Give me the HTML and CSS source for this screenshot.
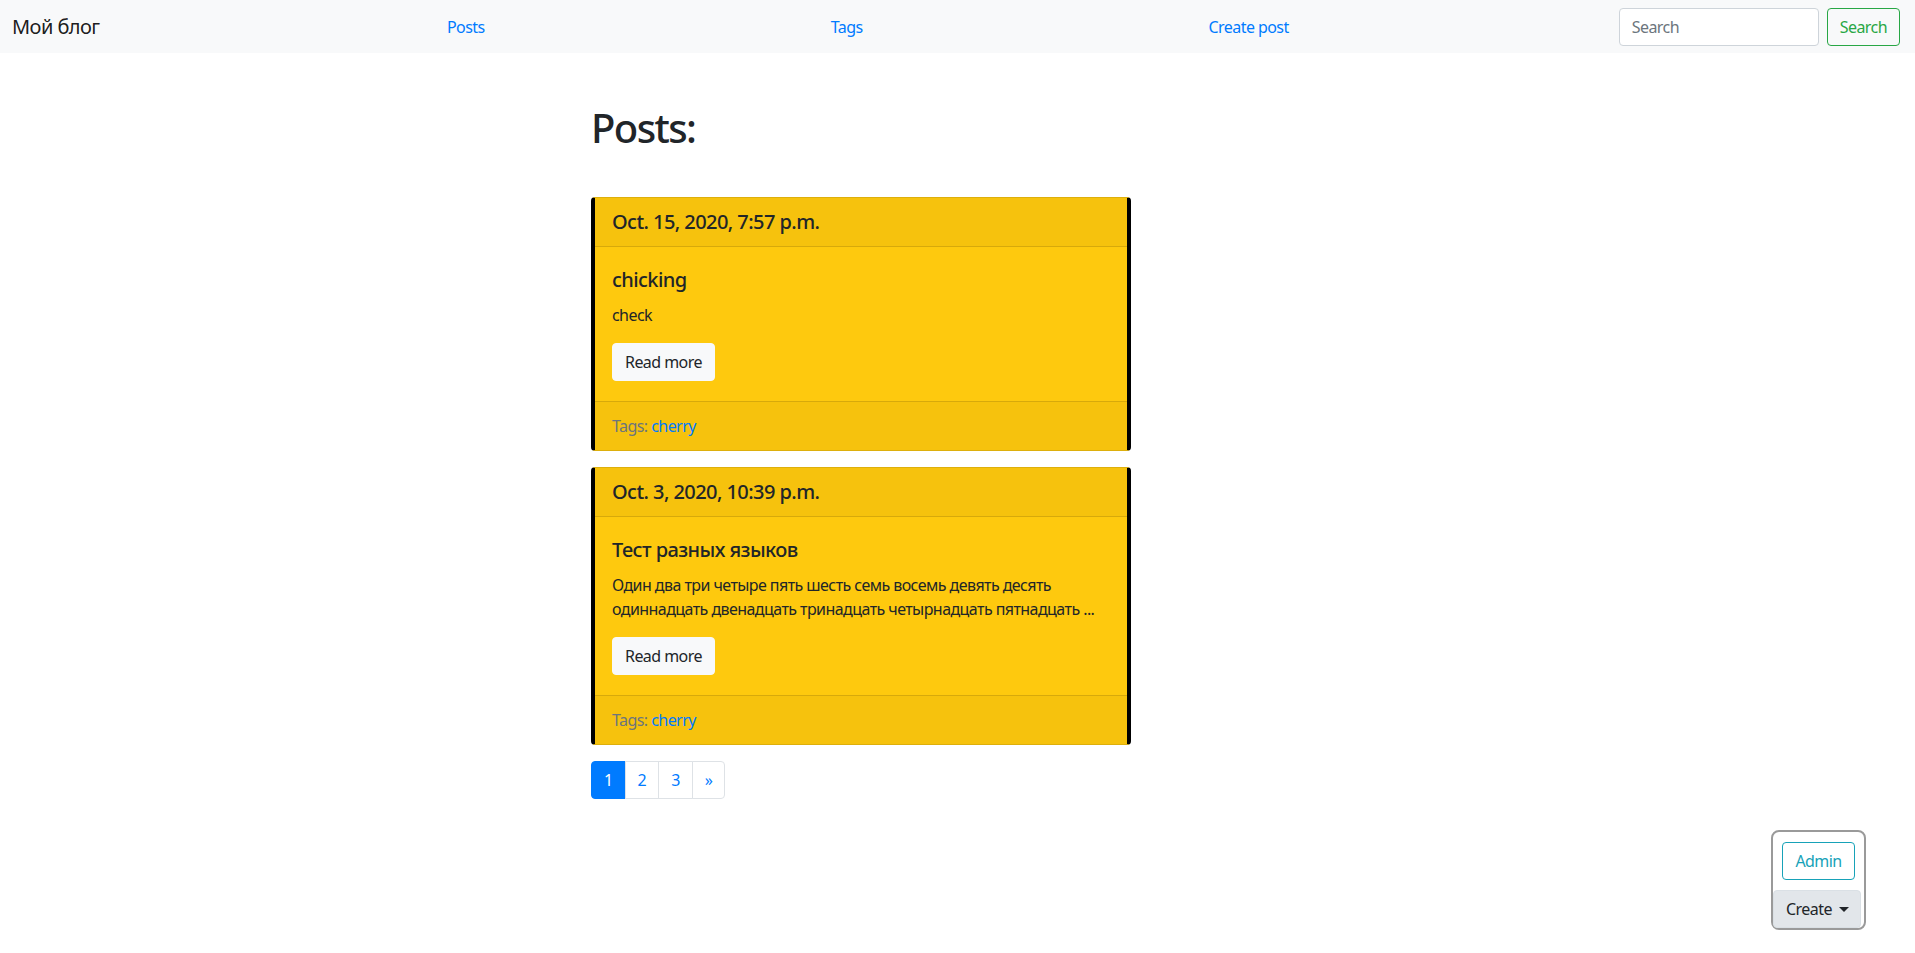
FILE: index.html
```html
<!DOCTYPE html>
<html lang="ru">
<head>
<meta charset="utf-8">
<title>Мой блог</title>
<link rel="stylesheet" href="styles.css">
</head>
<body>
<nav class="navbar">
  <a class="brand" href="#">Мой блог</a>
  <ul class="nav-links">
    <li><a href="#">Posts</a></li>
    <li><a href="#">Tags</a></li>
    <li><a href="#">Create post</a></li>
  </ul>
  <form class="search">
    <input class="search-input" type="search" placeholder="Search">
    <button class="search-btn" type="button">Search</button>
  </form>
</nav>

<main class="container">
  <div class="col">
    <h1 class="page-title">Posts:</h1>

    <div class="card">
      <div class="card-header">Oct. 15, 2020, 7:57 p.m.</div>
      <div class="card-body">
        <h5 class="card-title">chicking</h5>
        <p class="card-text">check</p>
        <a class="btn-light" href="#">Read more</a>
      </div>
      <div class="card-footer"><span class="muted">Tags: </span><a href="#">cherry</a></div>
    </div>

    <div class="card">
      <div class="card-header">Oct. 3, 2020, 10:39 p.m.</div>
      <div class="card-body">
        <h5 class="card-title">Тест разных языков</h5>
        <p class="card-text">Один два три четыре пять шесть семь восемь девять десять одиннадцать двенадцать тринадцать четырнадцать пятнадцать ...</p>
        <a class="btn-light" href="#">Read more</a>
      </div>
      <div class="card-footer"><span class="muted">Tags: </span><a href="#">cherry</a></div>
    </div>

    <ul class="pagination">
      <li><a class="page-link active" href="#">1</a></li>
      <li><a class="page-link" href="#">2</a></li>
      <li><a class="page-link" href="#">3</a></li>
      <li><a class="page-link" href="#">»</a></li>
    </ul>
  </div>
</main>

<div class="admin-box">
  <a class="admin-btn" href="#">Admin</a>
  <button class="create-btn" type="button">Create<span class="caret"></span></button>
</div>
</body>
</html>
```

FILE: styles.css
```css
* { box-sizing: border-box; }

html, body {
  margin: 0;
  padding: 0;
}

body {
  font-family: "Noto Sans", "Open Sans", sans-serif;
  font-size: 16px;
  line-height: 1.5;
  letter-spacing: -0.035em;
  color: #212529;
  background: #fff;
}

a { color: #007bff; text-decoration: none; }

/* Navbar */
.navbar {
  display: flex;
  align-items: center;
  height: 53px;
  padding: 0 15px 0 12px;
  background: #f8f9fa;
}

.brand {
  width: 89px;
  font-size: 20px;
  line-height: 30px;
  color: rgba(0, 0, 0, .9);
  white-space: nowrap;
}

.nav-links {
  flex: 1;
  display: flex;
  justify-content: space-evenly;
  list-style: none;
  margin: 0 -16px 0 0;
  padding: 0;
}

.nav-links a {
  font-size: 16px;
  line-height: 24px;
  color: #007bff;
}

.search {
  display: flex;
  gap: 8px;
  margin: 0;
}

.search-input {
  width: 200px;
  height: 38px;
  padding: 6px 12px;
  font: inherit;
  font-size: 16px;
  letter-spacing: -0.035em;
  color: #495057;
  background: #fff;
  border: 1px solid #ced4da;
  border-radius: 4px;
  outline: none;
}

.search-input::placeholder { color: #6c757d; }

.search-btn {
  height: 38px;
  padding: 6px 12px;
  font: inherit;
  font-size: 16px;
  letter-spacing: -0.035em;
  color: #28a745;
  background: transparent;
  border: 1px solid #28a745;
  border-radius: 4px;
}

/* Main */
.container {
  width: 1110px;
  margin: 0 auto;
}

.col {
  width: 540px;
  margin-left: 188.5px;
}

.page-title {
  margin: 51px 0 45px;
  font-size: 40px;
  font-weight: 500;
  line-height: 1.2;
  letter-spacing: -0.04em;
}

.card {
  margin-bottom: 16px;
  background: #fec90e;
  border: 1px solid rgba(0, 0, 0, .13);
  border-left: 4px solid #000;
  border-right: 4px solid #000;
  border-radius: 4px;
  overflow: hidden;
}

.card-header {
  padding: 12px 17px;
  font-size: 20px;
  font-weight: 500;
  line-height: 24px;
  background: rgba(0, 0, 0, .03);
  border-bottom: 1px solid rgba(0, 0, 0, .125);
}

.card-body {
  padding: 20px 17px;
}

.card-title {
  margin: 0 0 12px;
  padding-top: 2px;
  font-size: 20px;
  font-weight: 500;
  line-height: 22px;
}

.card-text {
  margin: 0 0 16px;
}

.btn-light {
  display: inline-block;
  height: 38px;
  padding: 6px 12px;
  line-height: 24px;
  color: #212529;
  background: #f8f9fa;
  border: 1px solid #f8f9fa;
  border-radius: 4px;
}

.card-footer {
  padding: 12px 17px;
  line-height: 24px;
  background: rgba(0, 0, 0, .03);
  border-top: 1px solid rgba(0, 0, 0, .125);
}

.muted { color: #6c757d; }

/* Pagination */
.pagination {
  display: flex;
  list-style: none;
  margin: 0;
  padding: 0;
}

.page-link {
  display: block;
  padding: 8px 12px;
  margin-left: -1px;
  line-height: 20px;
  color: #007bff;
  background: #fff;
  border: 1px solid #dee2e6;
}

.pagination li:first-child .page-link {
  margin-left: 0;
  border-radius: 4px 0 0 4px;
}

.pagination li:last-child .page-link {
  border-radius: 0 4px 4px 0;
}

.page-link.active {
  color: #fff;
  background: #007bff;
  border-color: #007bff;
}

/* Floating admin panel */
.admin-box {
  position: fixed;
  right: 49px;
  bottom: 23px;
  width: 95px;
  display: flex;
  flex-direction: column;
  align-items: center;
  gap: 10px;
  padding-top: 10px;
  background: #fff;
  border: 2px solid #9a9a9a;
  border-radius: 8px;
}

.admin-btn {
  height: 38px;
  padding: 6px 12px;
  line-height: 24px;
  color: #17a2b8;
  border: 1px solid #17a2b8;
  border-radius: 4px;
}

.create-btn {
  align-self: flex-start;
  width: 88px;
  height: 38px;
  padding: 6px 12px;
  font: inherit;
  font-size: 16px;
  line-height: 24px;
  letter-spacing: -0.035em;
  text-align: left;
  white-space: nowrap;
  color: #212529;
  background: #e2e6ea;
  border: 1px solid #dae0e5;
  border-radius: 4px;
}

.caret {
  display: inline-block;
  margin-left: 7px;
  vertical-align: 3px;
  border-top: 5px solid #212529;
  border-left: 5px solid transparent;
  border-right: 5px solid transparent;
}
```
